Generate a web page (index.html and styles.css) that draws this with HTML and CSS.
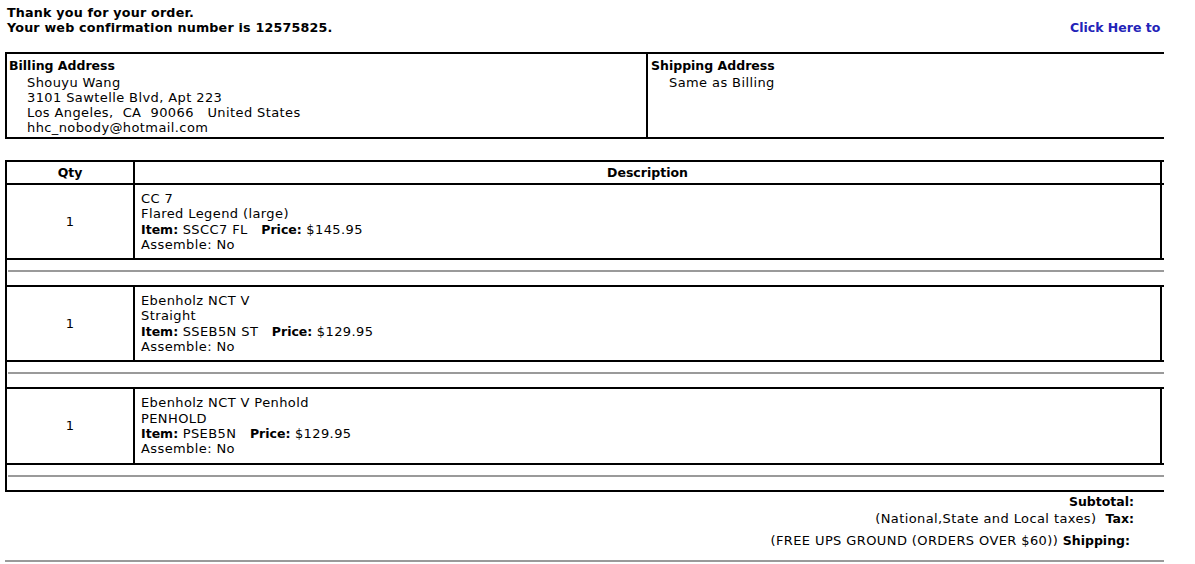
FILE: index.html
```html
<!DOCTYPE html>
<html>
<head>
<meta charset="utf-8">
<title>Order Confirmation</title>
<link rel="stylesheet" href="styles.css">
</head>
<body>
<div class="clip">
  <div class="sheet">
    <div class="top">
      <div class="thanks">
        <div class="b">Thank you for your order.</div>
        <div class="b">Your web confirmation number is 12575825.</div>
      </div>
      <a class="print" href="#">Click Here to</a>
    </div>

    <div class="addr">
      <div class="billing">
        <div class="h b">Billing Address</div>
        <div class="ind">Shouyu Wang</div>
        <div class="ind">3101 Sawtelle Blvd, Apt 223</div>
        <div class="ind pre">Los Angeles,  CA  90066   United States</div>
        <div class="ind">hhc_nobody@hotmail.com</div>
      </div>
      <div class="shipping">
        <div class="h b">Shipping Address</div>
        <div class="ind">Same as Billing</div>
      </div>
    </div>

    <div class="items">
      <div class="irow head">
        <div class="qty b">Qty</div>
        <div class="desc b">Description</div>
        <div class="price"></div>
      </div>

      <div class="irow item">
        <div class="qty">1</div>
        <div class="desc">
          <div>CC 7</div>
          <div>Flared Legend (large)</div>
          <div class="pre"><span class="b">Item:</span> SSCC7 FL   <span class="b">Price:</span> $145.95</div>
          <div>Assemble: No</div>
        </div>
        <div class="price"></div>
      </div>
      <div class="sep"><hr class="gline"></div>

      <div class="irow item">
        <div class="qty">1</div>
        <div class="desc">
          <div>Ebenholz NCT V</div>
          <div>Straight</div>
          <div class="pre"><span class="b">Item:</span> SSEB5N ST   <span class="b">Price:</span> $129.95</div>
          <div>Assemble: No</div>
        </div>
        <div class="price"></div>
      </div>
      <div class="sep"><hr class="gline"></div>

      <div class="irow item">
        <div class="qty">1</div>
        <div class="desc">
          <div>Ebenholz NCT V Penhold</div>
          <div>PENHOLD</div>
          <div class="pre"><span class="b">Item:</span> PSEB5N   <span class="b">Price:</span> $129.95</div>
          <div>Assemble: No</div>
        </div>
        <div class="price"></div>
      </div>
      <div class="sep"><hr class="gline"></div>
    </div>

    <div class="summary">
      <div class="sr"><div class="lbl"><span class="b">Subtotal:</span></div><div class="val"></div></div>
      <div class="sr"><div class="lbl pre">(National,State and Local taxes)  <span class="b">Tax:</span></div><div class="val"></div></div>
      <div class="sr ship"><div class="lbl">(FREE UPS GROUND (ORDERS OVER $60)) <span class="b">Shipping:</span></div><div class="val"></div></div>
    </div>
    <hr class="gline bottom">
  </div>
</div>
</body>
</html>
```
FILE: styles.css
```css
html, body {
  margin: 0;
  padding: 0;
  background: #ffffff;
}

body {
  font-family: "DejaVu Sans", Verdana, sans-serif;
  font-size: 13px;
  line-height: 15px;
  letter-spacing: 0.4px;
  color: #000000;
}

.clip {
  width: 1164px;
  overflow: hidden;
}

.sheet {
  width: 1246px;
  margin-left: 5px;
}

.b {
  font-weight: bold;
  font-size: 12.5px;
  letter-spacing: 0;
}

.pre {
  white-space: pre;
}

/* top block */
.top {
  display: grid;
  grid-template-columns: 1063px 1fr;
  align-items: end;
  padding: 5px 0 0 2px;
}

.thanks .b {
  font-size: 12.7px;
  letter-spacing: 0.2px;
}

.print {
  color: #2323b8;
  font-weight: bold;
  font-size: 12.5px;
  letter-spacing: 0;
  text-decoration: none;
  white-space: nowrap;
}

/* address box */
.addr {
  display: flex;
  margin-top: 17px;
  border: 2px solid #000;
}

.billing {
  width: 635px;
  flex: none;
  padding: 4px 2px 2px 2px;
  border-right: 2px solid #000;
}

.shipping {
  flex: 1;
  padding: 4px 2px 2px 3px;
}

.addr .h {
  margin-bottom: 2px;
}

.ind {
  padding-left: 18px;
}

/* items */
.items {
  margin-top: 21px;
  border-top: 2px solid #000;
  border-left: 2px solid #000;
}

.irow {
  display: grid;
  grid-template-columns: 128px 1027px 1fr;
  border-bottom: 2px solid #000;
}

.irow > div {
  border-right: 2px solid #000;
}

.irow > .price {
  border-right: 0;
}

.head > div {
  text-align: center;
  padding: 3px 0;
}

.item .qty {
  display: flex;
  align-items: center;
  justify-content: center;
}

.item .desc {
  padding: 6px 6px 6px 6px;
  line-height: 15.3px;
}

.sep {
  border-bottom: 2px solid #000;
  padding: 10px 0 13px 1px;
}

.gline {
  display: block;
  border: 0;
  height: 2px;
  margin: 0;
  background: #9a9a9a;
}

/* summary */
.summary {
  padding-top: 2px;
}

.sr {
  display: grid;
  grid-template-columns: 1fr 117px;
}

.sr + .sr {
  margin-top: 2px;
}

.sr.ship {
  margin-top: 7px;
}

.lbl {
  text-align: right;
}

.ship .lbl {
  padding-right: 4px;
}

.bottom {
  margin-top: 12px;
}
```
